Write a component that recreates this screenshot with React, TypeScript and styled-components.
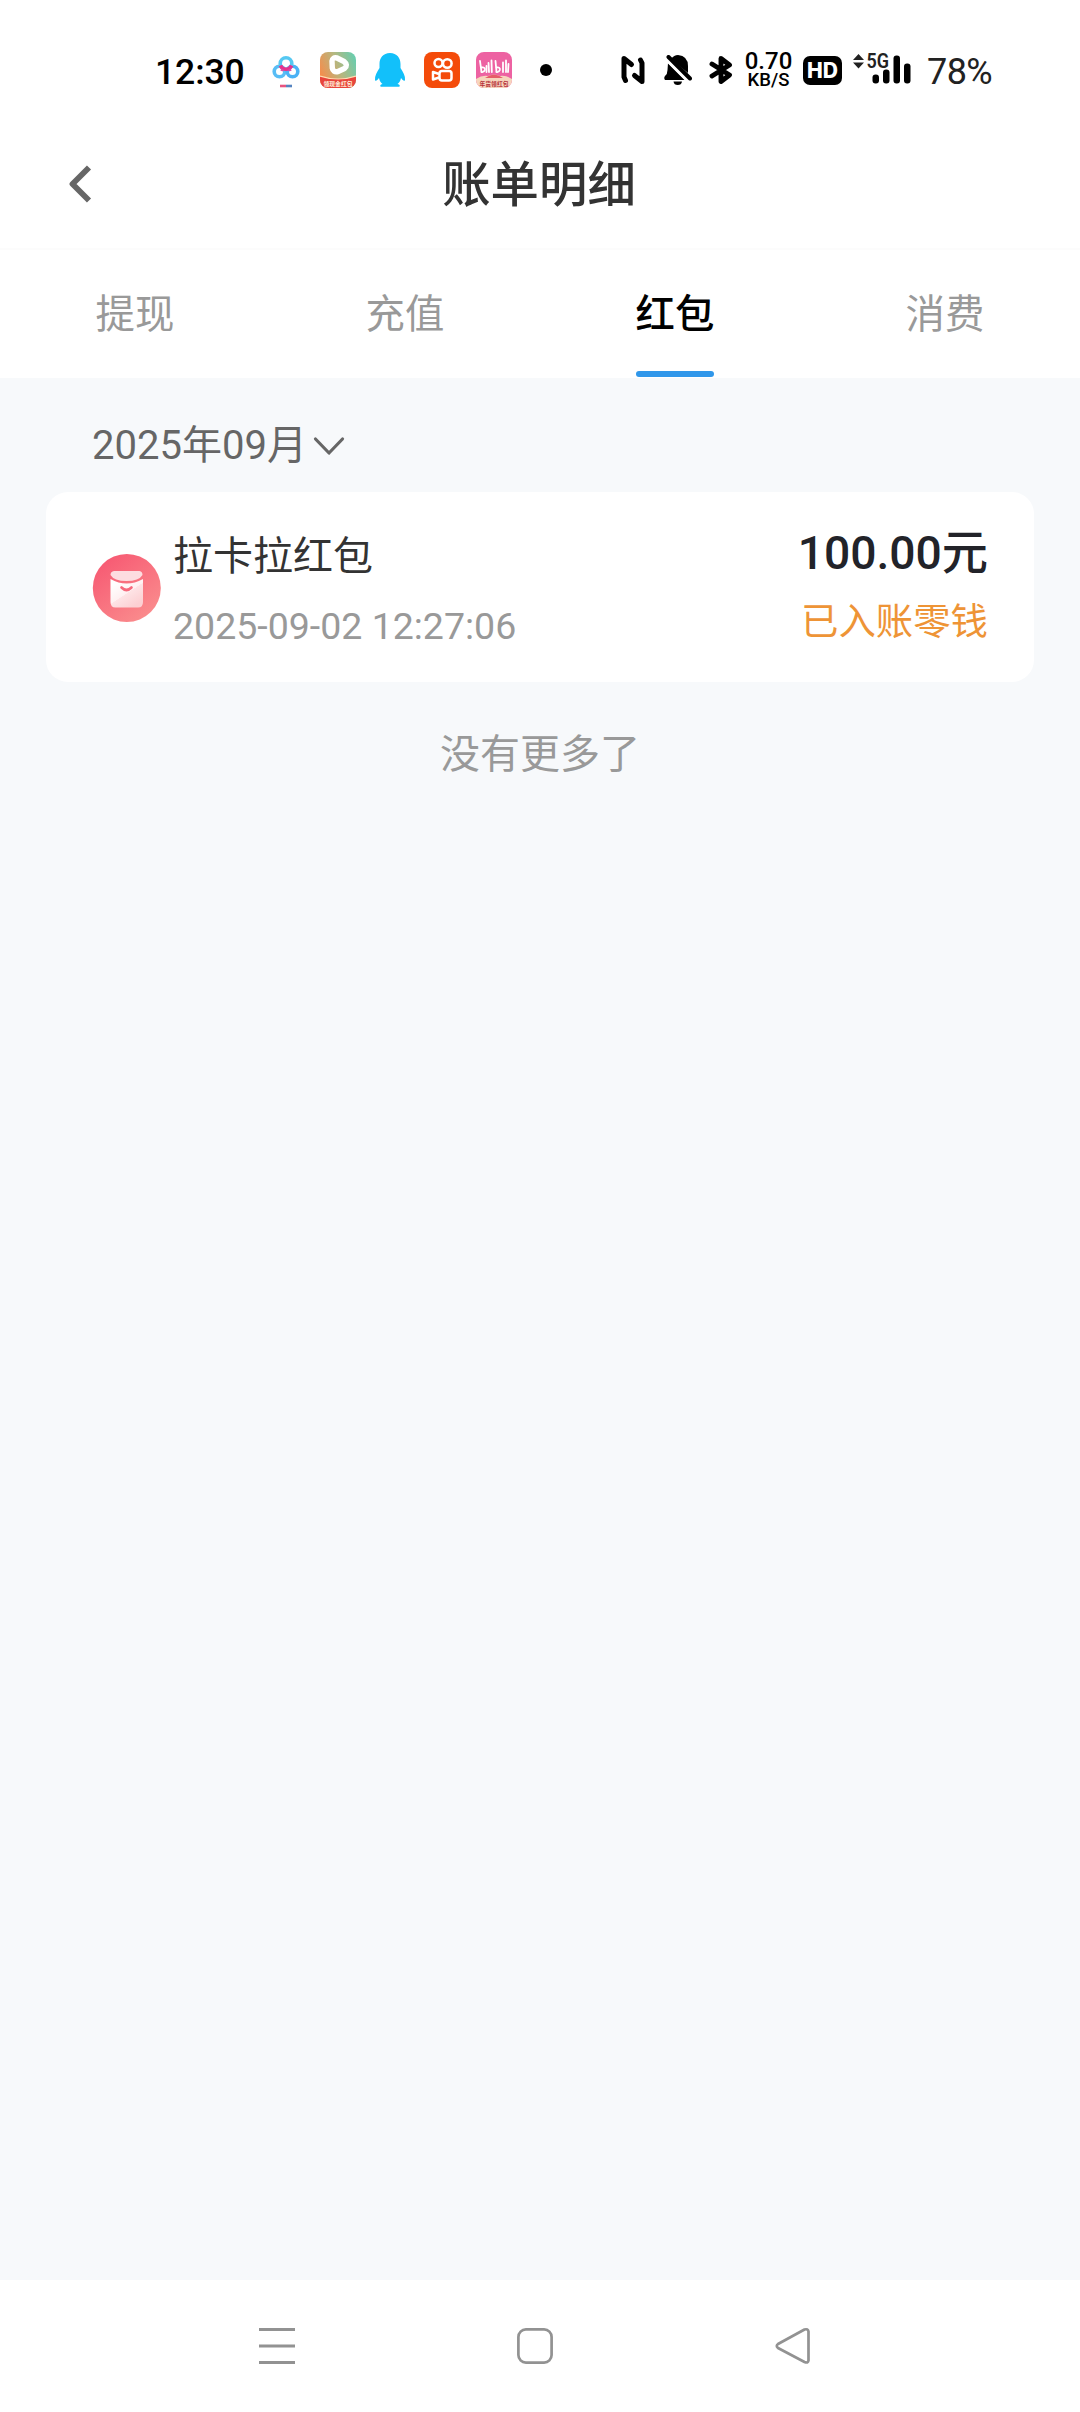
import React from 'react';
import styled, { createGlobalStyle } from 'styled-components';

const GlobalStyle = createGlobalStyle`
  *, *::before, *::after { box-sizing: border-box; }
  body {
    margin: 0;
    background: #fff;
    font-family: Roboto, "Noto Sans CJK SC", sans-serif;
  }
  svg { display: block; flex: none; }
`;

const Screen = styled.div`
  width: 1080px;
  height: 2412px;
  display: flex;
  flex-direction: column;
  background: #fff;
  overflow: hidden;
`;

const StatusBar = styled.header`
  height: 118px;
  padding: 22px 86px 0 155px;
  display: flex;
  align-items: center;
  justify-content: space-between;
`;

const StatusGroup = styled.div`
  display: flex;
  align-items: center;
`;

const Slot = styled.div<{ $before: number }>`
  flex: none;
  margin-left: ${(p) => p.$before}px;
`;

const Clock = styled.span`
  width: 90px;
  padding-top: 3px;
  font-size: 35.5px;
  line-height: 42px;
  font-weight: 500;
  letter-spacing: -0.1px;
  color: #000;
  white-space: nowrap;
`;

const Battery = styled.span`
  display: block;
  width: 67px;
  padding-top: 3px;
  font-size: 36px;
  line-height: 42px;
  color: #222;
  letter-spacing: -0.6px;
`;

const Speed = styled.div`
  width: 49px;
  display: flex;
  flex-direction: column;
  align-items: center;
  font-weight: 500;
  color: #000;
`;

const SpeedValue = styled.span`
  font-size: 24px;
  line-height: 19px;
`;

const SpeedUnit = styled.span`
  font-size: 18.5px;
  line-height: 18px;
`;

const TitleBar = styled.div`
  height: 132px;
  display: grid;
  grid-template-columns: 160px 1fr 160px;
  align-items: center;
  border-bottom: 2px solid #fcfcfc;
`;

const BackButton = styled.button`
  border: 0;
  padding: 2px 0 0 65px;
  background: none;
`;

const Title = styled.h1`
  margin: 0;
  padding: 5px 2px 0 0;
  text-align: center;
  font-size: 48.4px;
  line-height: 64px;
  font-weight: 500;
  color: #333;
`;

const Tabs = styled.nav`
  height: 128px;
  display: grid;
  grid-template-columns: repeat(4, 1fr);
  justify-items: center;
`;

const Tab = styled.div<{ $active?: boolean }>`
  height: 127px;
  padding-top: 37px;
  font-size: 39.4px;
  line-height: 56px;
  font-weight: ${(p) => (p.$active ? 500 : 400)};
  color: ${(p) => (p.$active ? '#000' : '#999')};
  display: flex;
  flex-direction: column;
  justify-content: space-between;
`;

const Underline = styled.span`
  height: 6px;
  border-radius: 3px;
  background: #3097ea;
`;

const Content = styled.main`
  flex: 1;
  padding: 0 46px;
  background: #f7f9fb;
`;

const Month = styled.div`
  height: 114px;
  padding: 22px 0 0 46px;
  display: flex;
  align-items: center;
  gap: 6px;
  font-size: 40px;
  line-height: 56px;
  color: #666;
`;

const Card = styled.section`
  height: 190px;
  padding: 2px 46px 0;
  border-radius: 22px;
  background: #fff;
  display: flex;
  align-items: center;
`;

const Details = styled.div`
  flex: 1;
  height: 188px;
  margin-left: 12px;
  padding-top: 34px;
`;

const Sums = styled(Details)`
  flex: none;
  text-align: right;
  padding-top: 29px;
`;

const Name = styled.div`
  font-size: 40px;
  line-height: 58px;
  color: #333;
`;

const Time = styled.div`
  margin-top: 13px;
  font-size: 37.5px;
  line-height: 54px;
  color: #999;
`;

const Amount = styled.div`
  font-size: 46.2px;
  line-height: 60px;
  font-weight: 500;
  color: #222329;
`;

const Status = styled.div`
  margin-top: 12px;
  font-size: 37.4px;
  line-height: 54px;
  color: #ee9436;
`;

const EndNote = styled.p`
  margin: 44px 0 0;
  text-align: center;
  font-size: 40px;
  line-height: 58px;
  color: #999;
`;

const NavBar = styled.footer`
  height: 132px;
  padding: 0 267px 0 257px;
  display: flex;
  align-items: center;
  justify-content: space-between;
  background: #fff;
`;

const CloudIcon = () => (
  <svg width="28" height="38" viewBox="0 0 28 38" fill="none" strokeWidth="3.600">
    <circle cx="7.500" cy="20.500" r="5.300" stroke="#58bdf5" />
    <circle cx="20.500" cy="20.500" r="5.300" stroke="#4bb2f5" />
    <circle cx="14" cy="12.500" r="5.800" stroke="#55c8f2" />
    <path d="M8.400 14.500Q10 18.300 14 18.300Q18 18.300 19.600 14.500" stroke="#e8328c" />
    <path d="M10.500 18L9.500 20M17.500 18L18.500 20" stroke="#d94aa8" strokeWidth="2.600" />
    <path d="M8 35h6" stroke="#e75480" strokeWidth="2.600" />
    <path d="M14 35h6" stroke="#5584c0" strokeWidth="2.600" />
  </svg>
);

const BadgeText = styled.text`
  font-family: "Noto Sans CJK SC", sans-serif;
  font-weight: 700;
  font-size: 5.8px;
`;

const VideoIcon = () => (
  <svg width="36" height="36" viewBox="0 0 36 36">
    <defs>
      <linearGradient id="video" x1="0" x2="1" y1=".6" y2=".2">
        <stop stopColor="#f58d4c" />
        <stop offset=".5" stopColor="#b8b67e" />
        <stop offset="1" stopColor="#68cdae" />
      </linearGradient>
      <clipPath id="round"><rect width="36" height="36" rx="8" /></clipPath>
    </defs>
    <g clipPath="url(#round)">
      <rect width="36" height="36" fill="url(#video)" />
      <path d="M0 24Q18 30 36 24V36H0Z" fill="#e8453c" />
      <path d="M0 24Q18 30 36 24" fill="none" stroke="#ffdcb0" strokeWidth="1.200" />
      <path d="M12 9Q12.500 5 17 6L24 9.500Q28.500 13 24.500 16.500L18 19.500Q13 20.500 12.300 16Z" fill="none" stroke="#fff" strokeWidth="5.400" strokeLinejoin="round" />
      <BadgeText x="18" y="33.500" textAnchor="middle" fill="#fff3df">领现金红包</BadgeText>
    </g>
  </svg>
);

const PenguinIcon = () => (
  <svg width="32" height="36" viewBox="0 0 32 36" fill="#12c0fa">
    <path d="M16 1C9 1 5.500 6 5.500 12V16C3 20 .5 24 1 28C1.500 30 3.500 28 5 26C5.500 29 7 31 8.500 32C6 32.500 5.500 34.500 7 34.700H25C26.500 34.500 26 32.500 23.500 32C25 31 26.500 29 27 26C28.500 28 30.500 30 31 28C31.500 24 29 20 26.500 16V12C26.500 6 23 1 16 1Z" />
  </svg>
);

const CameraIcon = () => (
  <svg width="36" height="36" viewBox="0 0 36 36">
    <rect width="36" height="36" rx="8" fill="#f44b0a" />
    <g fill="none" stroke="#fff" strokeWidth="2.500" strokeLinejoin="round">
      <circle cx="14.500" cy="11" r="4" />
      <circle cx="23.300" cy="11.500" r="4.300" />
      <rect x="15.500" y="19" width="12" height="9.500" rx="2.500" />
      <path d="M15 22L9 20V27.500L15 25.500" />
    </g>
  </svg>
);

const PinkIcon = () => (
  <svg width="36" height="36" viewBox="0 0 36 36">
    <defs>
      <clipPath id="pinkRound"><rect width="36" height="36" rx="8" /></clipPath>
    </defs>
    <g clipPath="url(#pinkRound)">
      <rect width="36" height="36" fill="#ed62a2" />
      <path d="M0 27Q6 23 12 24Q18 21 24 24Q30 23 36 27V36H0Z" fill="#f7d5bd" />
      <path d="M9 26Q18 19 27 26Z" fill="#e65c68" />
      <g fill="none" stroke="#fff" strokeWidth="1.800" strokeLinecap="round">
        <path d="M4 9L5.500 20M12.500 11L13 20M15.500 8.500L15.800 20M19.500 9L20.500 20M27 10.500V20M30 8.500V20M32.500 12L32 20M10.500 14V20" />
        <path d="M5.500 15.500Q9.500 15 8.800 18Q8 20.500 5.500 20M20.500 15.500Q24.500 15 23.800 18Q23 20.500 20.500 20" />
      </g>
      <BadgeText x="18" y="33.500" textAnchor="middle" fill="#b6303b">年货领红包</BadgeText>
    </g>
  </svg>
);

const DotIcon = () => (
  <svg width="12" height="12" viewBox="0 0 12 12"><circle cx="6" cy="6" r="6" /></svg>
);

const NfcIcon = () => (
  <svg width="24" height="30" viewBox="0 0 24 30" fill="none" stroke="#000" strokeWidth="5" strokeLinecap="round" strokeLinejoin="round">
    <path d="M4.500 25.500L3 22V3.500L10.500 9.500M19.500 5L21 8V26.500L13.500 20.500" />
  </svg>
);

const MuteIcon = () => (
  <svg width="28" height="30" viewBox="0 0 28 30">
    <path d="M7 4Q10 0 14 0Q24 1 24 11V18ZM4 8L21 25H1Q-.5 23 1 21Q3.500 19 3.500 15ZM9.500 26.500H18Q17.500 30 13.800 30Q10 30 9.500 26.500Z" />
    <path d="M4.500 2L26 23.500" stroke="#000" strokeWidth="4" strokeLinecap="round" />
    <path d="M2.500 5.500L23 26" stroke="#fff" strokeWidth="2.200" />
  </svg>
);

const BluetoothIcon = () => (
  <svg width="24" height="30" viewBox="0 0 24 30" fill="none" stroke="#000" strokeWidth="4.900" strokeLinecap="round" strokeLinejoin="round">
    <path d="M3 9L20.500 20L12 26.500V3.500L20.500 10L3 21" />
  </svg>
);

const HdText = styled.text`
  font-family: Inter, Roboto, sans-serif;
  font-weight: 800;
  font-size: 21px;
`;

const HdIcon = () => (
  <svg width="39" height="29" viewBox="0 0 39 29">
    <rect width="39" height="29" rx="7" />
    <HdText x="19.500" y="22" textAnchor="middle" textLength="31" lengthAdjust="spacingAndGlyphs" fill="#fff">HD</HdText>
  </svg>
);

const NetText = styled.text`
  font-family: Roboto, sans-serif;
  font-weight: 600;
  font-size: 20px;
`;

const SignalIcon = () => (
  <svg width="59" height="42" viewBox="0 -4 59 42">
    <path d="M0 7L5.500 1L11 7ZM0 9.500H11L5.500 15.500Z" fill="#222" />
    <NetText x="13.500" y="15.300" textLength="22.500" lengthAdjust="spacingAndGlyphs" fill="#222">5G</NetText>
    <rect x="19.500" y="21.500" width="6.500" height="9" rx="3" />
    <rect x="30" y="16.500" width="6.500" height="14" rx="3" />
    <rect x="40.500" y="2.500" width="6.500" height="28" rx="3" />
    <rect x="51" y="10.500" width="6.500" height="20" rx="3" />
  </svg>
);

const BackIcon = () => (
  <svg width="28" height="42" viewBox="0 0 28 42" fill="none" stroke="#666" strokeWidth="5.800">
    <path d="M24 4.500L7.500 21L24 37.500" strokeLinejoin="round" />
  </svg>
);

const DownIcon = () => (
  <svg width="32" height="20" viewBox="0 0 32 20" fill="none" stroke="#666" strokeWidth="3.200" strokeLinecap="round" strokeLinejoin="round">
    <path d="M2.500 3L16 17L29.500 3" />
  </svg>
);

const PacketIcon = () => (
  <svg width="69" height="68" viewBox="0 0 69 68">
    <defs>
      <linearGradient id="red" x1=".2" y1=".1" x2=".8" y2=".9">
        <stop stopColor="#f75c74" />
        <stop offset="1" stopColor="#fa8a8c" />
      </linearGradient>
      <linearGradient id="paper" x1=".2" y1=".1" x2=".8" y2=".9">
        <stop stopColor="#fff" />
        <stop offset=".5" stopColor="#fff0f1" />
        <stop offset=".51" stopColor="#fee3e5" />
        <stop offset="1" stopColor="#fcd0d3" />
      </linearGradient>
    </defs>
    <circle cx="34.800" cy="34" r="34" fill="url(#red)" />
    <path d="M18.500 25Q34.500 34 51 25V48Q51 53.500 46 53.500H23.500Q18.500 53.500 18.500 48Z" fill="url(#paper)" />
    <path d="M22 17H47.500Q50.500 17.500 50.500 21Q47 27 34.500 27Q22 27 18.500 21Q18.500 17.500 22 17Z" fill="#fddde0" />
    <path d="M29.500 33.500Q34.500 38.500 39.500 33.500" fill="none" stroke="#f7697c" strokeWidth="2.600" strokeLinecap="round" />
  </svg>
);

const MenuIcon = () => (
  <svg width="40" height="40" viewBox="0 0 40 40" stroke="#929292" strokeWidth="3">
    <path d="M2 3.500H38M2 20H38M2 36.500H38" />
  </svg>
);

const HomeIcon = () => (
  <svg width="40" height="40" viewBox="0 0 40 40" fill="none" stroke="#929292" strokeWidth="2.700">
    <rect x="3.400" y="3.400" width="33.200" height="33.200" rx="7.500" />
  </svg>
);

const ReturnIcon = () => (
  <svg width="40" height="40" viewBox="0 0 40 40" fill="none" stroke="#929292" strokeWidth="2.700" strokeLinejoin="round">
    <path d="M5 18L31.500 3.500Q35 2.500 35.500 5.500V34.500Q35 37.500 31.500 36L5 22Q2.500 20 5 18Z" />
  </svg>
);

export default function App() {
  return (
    <>
      <GlobalStyle />
      <Screen>
        <StatusBar>
          <StatusGroup>
            <Clock>12:30</Clock>
            <Slot $before={27}><CloudIcon /></Slot>
            <Slot $before={20}><VideoIcon /></Slot>
            <Slot $before={18}><PenguinIcon /></Slot>
            <Slot $before={18}><CameraIcon /></Slot>
            <Slot $before={16}><PinkIcon /></Slot>
            <Slot $before={28}><DotIcon /></Slot>
          </StatusGroup>
          <StatusGroup>
            <NfcIcon />
            <Slot $before={19}><MuteIcon /></Slot>
            <Slot $before={17}><BluetoothIcon /></Slot>
            <Slot $before={11}>
              <Speed>
                <SpeedValue>0.70</SpeedValue>
                <SpeedUnit>KB/S</SpeedUnit>
              </Speed>
            </Slot>
            <Slot $before={10}><HdIcon /></Slot>
            <Slot $before={11}><SignalIcon /></Slot>
            <Slot $before={15}><Battery>78%</Battery></Slot>
          </StatusGroup>
        </StatusBar>
        <TitleBar>
          <BackButton aria-label="返回"><BackIcon /></BackButton>
          <Title>账单明细</Title>
        </TitleBar>
        <Tabs>
          <Tab>提现</Tab>
          <Tab>充值</Tab>
          <Tab $active>红包<Underline /></Tab>
          <Tab>消费</Tab>
        </Tabs>
        <Content>
          <Month>2025年09月<DownIcon /></Month>
          <Card>
            <PacketIcon />
            <Details>
              <Name>拉卡拉红包</Name>
              <Time>2025-09-02 12:27:06</Time>
            </Details>
            <Sums>
              <Amount>100.00元</Amount>
              <Status>已入账零钱</Status>
            </Sums>
          </Card>
          <EndNote>没有更多了</EndNote>
        </Content>
        <NavBar>
          <MenuIcon />
          <HomeIcon />
          <ReturnIcon />
        </NavBar>
      </Screen>
    </>
  );
}
